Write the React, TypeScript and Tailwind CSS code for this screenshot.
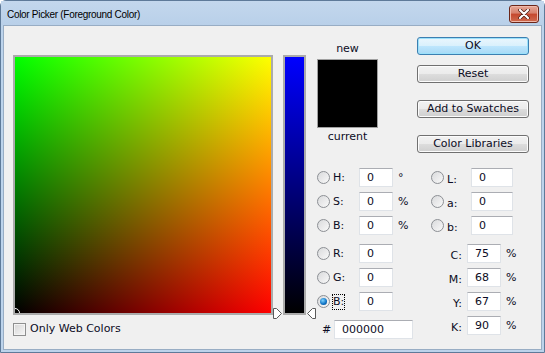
import React from "react";

const txt = "text-[11px] leading-[14px] text-[#0c0c24]";

function Radio({ checked = false }: { checked?: boolean }) {
  return (
    <div className="w-[13px] h-[13px] shrink-0 rounded-full border border-[#8c8f94] bg-[linear-gradient(135deg,#d9dadc,#f9f9f9)] flex items-center justify-center">
      {checked && (
        <div className="w-[7px] h-[7px] rounded-full bg-[radial-gradient(circle_at_40%_35%,#7fd4ff,#0a6fc2_60%,#06407a)]" />
      )}
    </div>
  );
}

function Input({ value, w }: { value: string; w: string }) {
  return (
    <div
      className={`${w} h-[19px] shrink-0 bg-white border border-[#dfe3e8] border-t-[#abadb3] flex items-center pl-[7px] ${txt}`}
    >
      {value}
    </div>
  );
}

function Button({ label, primary = false }: { label: string; primary?: boolean }) {
  return (
    <div
      className={`w-[112px] h-[18px] rounded-[3px] border flex items-center justify-center ${txt} ${
        primary
          ? "border-[#3c7fb1] bg-[linear-gradient(to_bottom,#eaf6fd_0%,#d9f0fc_50%,#bee6fd_50%,#a7d9f5_100%)] shadow-[inset_0_0_0_1px_#9be1fb]"
          : "border-[#707070] bg-[linear-gradient(to_bottom,#f2f2f2_0%,#ebebeb_50%,#dddddd_50%,#cfcfcf_100%)] shadow-[inset_0_0_0_1px_#fcfcfc]"
      }`}
    >
      {label}
    </div>
  );
}

function LeftRow({
  label,
  unit,
  checked,
  focus,
}: {
  label: string;
  unit?: string;
  checked?: boolean;
  focus?: boolean;
}) {
  return (
    <div className="h-[19px] flex items-center">
      <Radio checked={checked} />
      <div className="w-[26px] ml-[3px] flex items-center">
        <span className={`${txt} ${focus ? "outline outline-1 outline-dotted outline-[#000] outline-offset-0" : ""}`}>
          {label}
        </span>
      </div>
      <Input value="0" w="w-[34px]" />
      <span className={`${txt} ml-[5px]`}>{unit ?? ""}</span>
    </div>
  );
}

function LabRow({ label }: { label: string }) {
  return (
    <div className="h-[19px] flex items-center pl-[14px]">
      <Radio />
      <div className="w-[24px] ml-[3px]">
        <span className={txt}>{label}</span>
      </div>
      <Input value="0" w="w-[42px]" />
    </div>
  );
}

function CmykRow({ label, value }: { label: string; value: string }) {
  return (
    <div className="h-[19px] flex items-center">
      <div className="w-[50px] pr-[5px] text-right">
        <span className={txt}>{label}</span>
      </div>
      <Input value={value} w="w-[34px]" />
      <span className={`${txt} ml-[5px]`}>%</span>
    </div>
  );
}

export default function App() {
  return (
    <div className="w-[545px] h-[353px] overflow-hidden bg-white font-['DejaVu_Sans',Verdana,sans-serif]">
      <div className="w-full h-full flex flex-col rounded-t-[6px] border border-[#5e7a99] bg-[#bcd3eb]">
        {/* Title bar */}
        <div className="h-[24px] shrink-0 flex items-center justify-between pl-[6px] pr-[5px] bg-[linear-gradient(to_bottom,#c3d7ed,#b9d0e9)]">
          <span className="mt-[3px] font-['Liberation_Sans',Arial,sans-serif] text-[10px] text-black leading-none tracking-[-0.3px]">
            Color Picker (Foreground Color)
          </span>
          <div className="w-[30px] h-[18px] mt-[2px] rounded-[3px] border border-[#6b2619] bg-[linear-gradient(to_bottom,#e5a797_0%,#d7806b_45%,#c5472d_50%,#cf6b4f_100%)] shadow-[inset_0_0_0_1px_#f0b9aa] flex items-center justify-center">
            <svg width="12" height="10" viewBox="0 0 12 10">
              <path d="M2 1 L10 9 M10 1 L2 9" stroke="#4a1a10" strokeWidth="3.6" strokeLinecap="round" />
              <path d="M2 1 L10 9 M10 1 L2 9" stroke="#ffffff" strokeWidth="2.2" strokeLinecap="round" />
            </svg>
          </div>
        </div>

        {/* Content */}
        <div className="flex-1 mx-[2px] mb-[2px] border border-[#98adc4] bg-[#f0f0f0] flex">
          {/* Field column */}
          <div className="ml-[9px] mt-[29px] flex flex-col">
            <div className="w-[260px] h-[260px] border-2 border-[#ababab] relative overflow-hidden">
              <div className="w-full h-full bg-[image:linear-gradient(to_top,#000000,#00ff00),linear-gradient(to_right,#000000,#ff0000)] bg-blend-screen" />
              <div className="absolute left-[-5px] bottom-[-5px] w-[10px] h-[10px] rounded-full border border-white" />
            </div>
            <div className="mt-[7px] flex items-center">
              <div className="w-[13px] h-[13px] border border-[#8e8f8f] bg-[linear-gradient(135deg,#d6d6d6,#f6f6f6)] shadow-[inset_0_0_0_1px_#f4f4f4]" />
              <span className={`${txt} ml-[4px]`}>Only Web Colors</span>
            </div>
          </div>

          {/* Slider */}
          <div className="ml-[10px] mt-[29px] w-[23px] h-[260px] relative">
            <div className="w-full h-full border-2 border-[#ababab] bg-[linear-gradient(to_bottom,#0000ff,#000000)]" />
            <svg className="absolute left-[-10px] top-[253px]" width="10" height="11" viewBox="0 0 10 11">
              <path d="M0.5 0.5 L3.5 0.5 L8.5 5.5 L3.5 10.5 L0.5 10.5 Z" fill="#ffffff" stroke="#5a5a5a" />
            </svg>
            <svg className="absolute left-[23px] top-[253px]" width="10" height="11" viewBox="0 0 10 11">
              <path d="M9.5 0.5 L6.5 0.5 L1.5 5.5 L6.5 10.5 L9.5 10.5 Z" fill="#ffffff" stroke="#5a5a5a" />
            </svg>
          </div>

          {/* Middle column */}
          <div className="ml-[11px] w-[100px] flex flex-col">
            <div className="w-[61px] mt-[16px] flex flex-col items-center">
              <span className={`${txt}`}>new</span>
              <div className="mt-[3px] w-[61px] h-[69px] border border-[#a0a0a0] flex flex-col">
                <div className="flex-1 bg-black" />
                <div className="flex-1 bg-black" />
              </div>
              <span className={`${txt} mt-[2px]`}>current</span>
            </div>
            <div className="mt-[24px] flex flex-col gap-[5px]">
              <LeftRow label="H:" unit="°" />
              <LeftRow label="S:" unit="%" />
              <LeftRow label="B:" unit="%" />
            </div>
            <div className="mt-[9px] flex flex-col gap-[5px]">
              <LeftRow label="R:" />
              <LeftRow label="G:" />
              <LeftRow label="B:" checked focus />
            </div>
            <div className="mt-[9px] h-[19px] flex items-center">
              <span className={`${txt} ml-[5px] w-[12px]`}>#</span>
              <Input value="000000" w="w-[79px]" />
            </div>
          </div>

          {/* Right column */}
          <div className="flex flex-col">
            <div className="mt-[11px] flex flex-col">
              <Button label="OK" primary />
              <div className="mt-[10px]">
                <Button label="Reset" />
              </div>
              <div className="mt-[17px]">
                <Button label="Add to Swatches" />
              </div>
              <div className="mt-[17px]">
                <Button label="Color Libraries" />
              </div>
            </div>
            <div className="mt-[15px] flex flex-col gap-[5px]">
              <LabRow label="L:" />
              <LabRow label="a:" />
              <LabRow label="b:" />
            </div>
            <div className="mt-[9px] flex flex-col gap-[5px]">
              <CmykRow label="C:" value="75" />
              <CmykRow label="M:" value="68" />
              <CmykRow label="Y:" value="67" />
              <CmykRow label="K:" value="90" />
            </div>
          </div>
        </div>
      </div>
    </div>
  );
}
